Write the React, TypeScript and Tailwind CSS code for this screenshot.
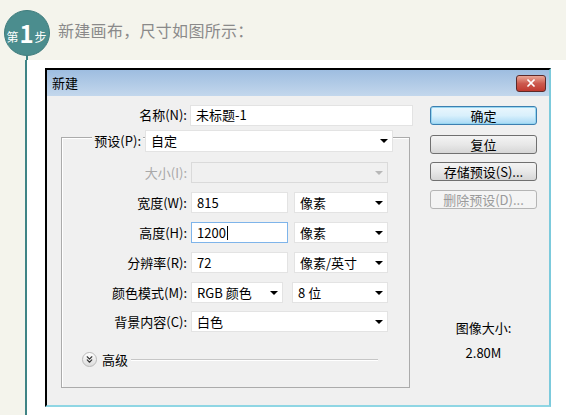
import { ChevronsDown, X } from "lucide-react";

function Arrow({ disabled }: { disabled?: boolean }) {
  return (
    <span
      className={`w-0 h-0 border-l-[4px] border-r-[4px] border-t-[4px] border-l-transparent border-r-transparent ${
        disabled ? "border-t-[#b8b8b8]" : "border-t-black"
      }`}
    />
  );
}

function Field({
  value,
  className,
  focused,
  caret,
}: {
  value: string;
  className: string;
  focused?: boolean;
  caret?: boolean;
}) {
  return (
    <div
      className={`h-[21px] flex items-center pl-[5px] bg-white border ${
        focused ? "border-[#7eb4ea]" : "border-[#e3e3e3]"
      } ${className}`}
    >
      <span>{value}</span>
      {caret && <span className="w-px h-[14px] bg-black ml-px" />}
    </div>
  );
}

function Select({
  value,
  className,
  disabled,
}: {
  value?: string;
  className: string;
  disabled?: boolean;
}) {
  return (
    <div
      className={`h-[21px] flex items-center justify-between pl-[5px] pr-[4px] border ${
        disabled ? "bg-[#f0f0f0] border-[#dadada]" : "bg-white border-[#e3e3e3]"
      } ${className}`}
    >
      <span>{value}</span>
      <Arrow disabled={disabled} />
    </div>
  );
}

function Row({
  label,
  disabled,
  className,
  children,
}: {
  label: string;
  disabled?: boolean;
  className: string;
  children: React.ReactNode;
}) {
  return (
    <div className={`flex items-center ${className}`}>
      <span className={`w-[125px] text-right ${disabled ? "text-[#a8a8a8]" : ""}`}>{label}</span>
      <div className="ml-[4px] flex items-center">{children}</div>
    </div>
  );
}

function Button({
  label,
  primary,
  disabled,
  className,
}: {
  label: string;
  primary?: boolean;
  disabled?: boolean;
  className: string;
}) {
  let cls = "border-[#707070] bg-gradient-to-b from-[#f4f4f4] via-[#e8e8e8] to-[#d6d6d6] text-black";
  if (primary)
    cls =
      "border-[#3c7fb1] bg-gradient-to-b from-[#eaf6fd] via-[#d9f0fc] to-[#a7d9f5] text-black shadow-[inset_0_0_0_1px_#98d6f0]";
  if (disabled) cls = "border-[#b5b5b5] bg-[#f4f4f4] text-[#9a9a9a]";
  return (
    <div
      className={`w-[107px] h-[19px] rounded-[3px] border flex items-center justify-center leading-none ${cls} ${className}`}
    >
      {label}
    </div>
  );
}

export default function App() {
  return (
    <div className="w-[566px] h-[415px] overflow-hidden bg-[#f4f4ec] font-['Noto_Sans_CJK_SC','Liberation_Sans',sans-serif] text-[13px] text-black">
      {/* step header */}
      <div className="h-[60px] flex items-start">
        <div className="w-[51px] flex flex-col items-center pl-[2px] mt-[10px]">
          <div className="w-[46px] h-[46px] rounded-full bg-[#4b8d8e] border border-[#3f7c7d] flex items-end justify-center pb-[12px] text-white leading-none">
            <span className="text-[12px]">第</span>
            <span className="text-[24px] font-bold leading-[20px] mx-px">1</span>
            <span className="text-[12px]">步</span>
          </div>
          <div className="w-[2px] h-[4px] bg-[#3f8485]" />
        </div>
        <div className="ml-[7px] mt-[18px] text-[16px] text-[#8a8a8a] tracking-[0.3px]">
          新建画布，尺寸如图所示：
        </div>
      </div>

      {/* body */}
      <div className="flex h-[355px]">
        <div className="w-[25px] bg-[#f4f4ec]" />
        <div className="w-[2px] bg-[#3f8485]" />
        <div className="flex-1 bg-white pl-[18px] pt-[8px]">
          {/* dialog */}
          <div className="w-[506px] h-[339px] border-t-2 border-l-2 border-black border-r-2 border-b-2 border-r-[#7ccadc] border-b-[#8fd6e4] bg-[#f0f0f0] flex flex-col">
            <div className="h-[26px] flex items-center justify-between pl-[5px] pr-[3px] bg-gradient-to-b from-[#9ebde0] to-[#c3d7ec]">
              <span>新建</span>
              <div className="w-[30px] h-[17px] rounded-[3px] border border-[#5c2a2a] bg-gradient-to-b from-[#e9a797] via-[#cc5a4f] to-[#c0392f] flex items-center justify-center">
                <X className="w-[12px] h-[12px] text-white" strokeWidth={3.5} />
              </div>
            </div>

            <div className="flex">
              {/* left form */}
              <div className="w-[366px] pt-[9px]">
                <div className="flex items-center h-[20px]">
                  <span className="w-[140px] text-right">名称(N):</span>
                  <Field value="未标题-1" className="ml-[3px] w-[223px] h-[20px]" />
                </div>

                <div className="ml-[14px] mt-[12px] w-[349px] border border-[#ababab] shadow-[inset_1px_1px_0_#fff] pb-[20px]">
                  <div className="flex items-center h-[22px] -mt-[8px]">
                    <div className="w-[30px]" />
                    <span className="w-[51px] text-right pr-[2px] bg-[#f0f0f0] h-[22px] leading-[22px]">预设(P):</span>
                    <Select value="自定" className="ml-[2px] w-[248px] h-[22px]" />
                  </div>
                  <Row label="大小(I):" disabled className="mt-[10px]">
                    <Select className="w-[197px]" disabled />
                  </Row>
                  <Row label="宽度(W):" className="mt-[9px]">
                    <Field value="815" className="w-[97px]" />
                    <Select value="像素" className="ml-[6px] w-[94px]" />
                  </Row>
                  <Row label="高度(H):" className="mt-[9px]">
                    <Field value="1200" className="w-[97px]" focused caret />
                    <Select value="像素" className="ml-[6px] w-[94px]" />
                  </Row>
                  <Row label="分辨率(R):" className="mt-[9px]">
                    <Field value="72" className="w-[97px]" />
                    <Select value="像素/英寸" className="ml-[6px] w-[94px]" />
                  </Row>
                  <Row label="颜色模式(M):" className="mt-[9px]">
                    <Select value="RGB 颜色" className="w-[92px]" />
                    <Select value="8 位" className="ml-[9px] w-[96px]" />
                  </Row>
                  <Row label="背景内容(C):" className="mt-[8px]">
                    <Select value="白色" className="w-[197px]" />
                  </Row>
                  <div className="flex items-center h-[15px] mt-[20px]">
                    <div className="ml-[20px] w-[15px] h-[15px] rounded-full border border-[#b9b9b9] bg-gradient-to-b from-white to-[#dcdcdc] flex items-center justify-center">
                      <ChevronsDown className="w-[11px] h-[11px] text-[#333]" strokeWidth={2.5} />
                    </div>
                    <span className="ml-[5px]">高级</span>
                    <div className="ml-[3px] w-[247px] h-[2px] border-t border-[#c6c6c6] border-b border-b-white" />
                  </div>
                </div>
              </div>

              {/* right buttons */}
              <div className="ml-[17px] w-[107px] pt-[10px] flex flex-col">
                <Button label="确定" primary className="" />
                <Button label="复位" className="mt-[10px]" />
                <Button label="存储预设(S)..." className="mt-[8px]" />
                <Button label="删除预设(D)..." disabled className="mt-[9px]" />
                <div className="mt-[110px] text-center leading-[18px]">图像大小:</div>
                <div className="mt-[7px] text-center leading-[18px]">2.80M</div>
              </div>
            </div>
          </div>
        </div>
      </div>
    </div>
  );
}
